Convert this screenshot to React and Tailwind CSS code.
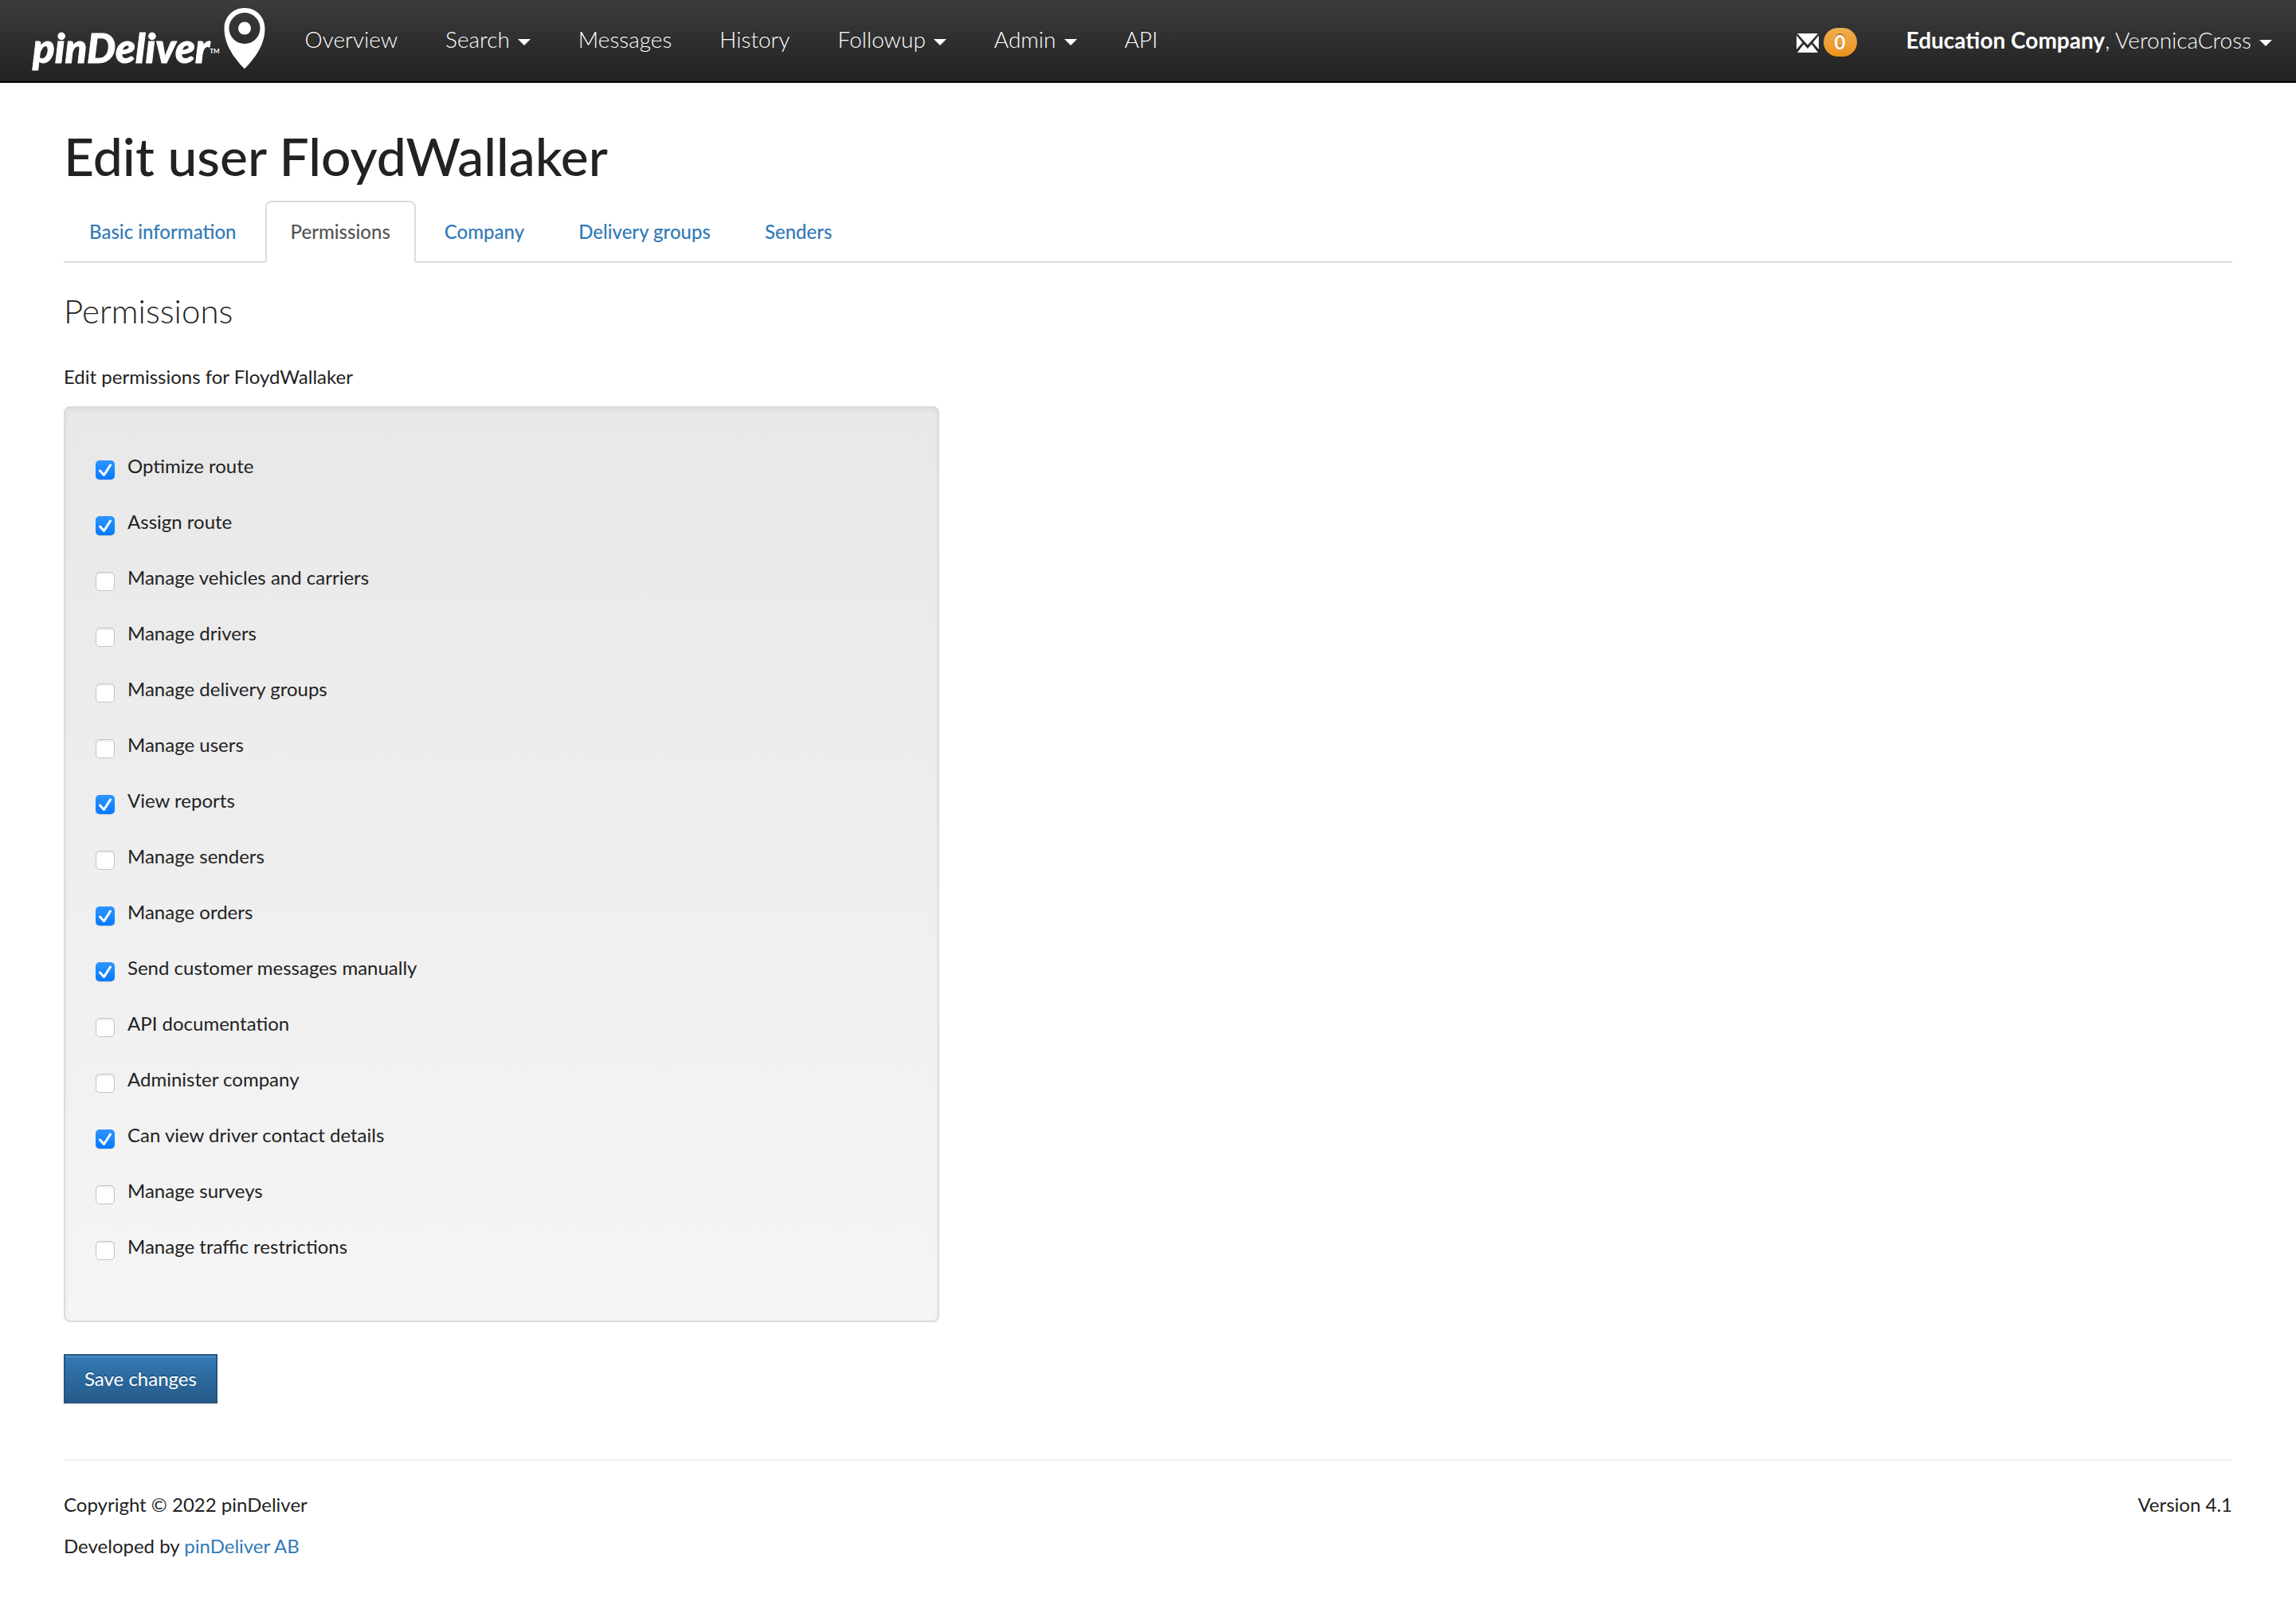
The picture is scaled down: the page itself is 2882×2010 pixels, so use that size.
const navItems = [
  { label: "Overview" },
  { label: "Search", menu: true },
  { label: "Messages" },
  { label: "History" },
  { label: "Followup", menu: true },
  { label: "Admin", menu: true },
  { label: "API" },
];

const tabs = ["Basic information", "Permissions", "Company", "Delivery groups", "Senders"];

const permissions = [
  ["Optimize route", true],
  ["Assign route", true],
  ["Manage vehicles and carriers", false],
  ["Manage drivers", false],
  ["Manage delivery groups", false],
  ["Manage users", false],
  ["View reports", true],
  ["Manage senders", false],
  ["Manage orders", true],
  ["Send customer messages manually", true],
  ["API documentation", false],
  ["Administer company", false],
  ["Can view driver contact details", true],
  ["Manage surveys", false],
  ["Manage traffic restrictions", false],
];

function Caret() {
  return (
    <svg className="mt-2 ml-[10px] h-2 w-4" viewBox="0 0 16 8" fill="currentColor" aria-hidden="true">
      <path d="M0 0h16L8 8z" />
    </svg>
  );
}

function Logo() {
  return (
    <a href="#home" className="flex items-start text-white" aria-label="pinDeliver">
      <span className="mt-8 flex items-start">
        <span className="text-[51px] leading-[56px] font-black italic [-webkit-text-stroke:1px_white]">pinDeliver</span>
        <span className="mt-7 text-[8px] leading-[8px] font-bold">TM</span>
      </span>
      <svg className="mt-[10px] ml-[5px] h-[76px] w-[52px]" viewBox="0 0 52 76" aria-hidden="true">
        <path
          fill="currentColor"
          fillRule="evenodd"
          d="M26 0C11.500 0 .5 11 .5 26C.5 47 14 64 26 76.500C38 64 51.500 47 51.500 26C51.500 11 40.500 0 26 0ZM26 6A19.500 19.500 0 1 1 26 45A19.500 19.500 0 1 1 26 6Z"
        />
        <circle cx="26" cy="25.500" r="8" fill="currentColor" />
      </svg>
    </a>
  );
}

function Permission({ label, checked }) {
  return (
    <label className="flex h-[34px] items-start gap-4">
      <span className="mt-[10px] grid size-6 shrink-0">
        <input
          type="checkbox"
          defaultChecked={checked}
          className="peer col-start-1 row-start-1 size-6 appearance-none rounded-[5px] border border-[#c4c4c4] bg-white shadow-[inset_0_2px_2px_rgba(0,0,0,0.08)] checked:border-0 checked:bg-linear-to-b checked:from-[#2d95ff] checked:to-[#007aff] checked:shadow-[0_1px_1px_rgba(0,0,0,0.15)]"
        />
        <svg
          className="pointer-events-none invisible col-start-1 row-start-1 size-6 text-white peer-checked:visible"
          viewBox="0 0 24 24"
          fill="none"
          stroke="currentColor"
          strokeWidth="3"
          strokeLinecap="round"
          strokeLinejoin="round"
          aria-hidden="true"
        >
          <path d="M5.500 13l5 5.500L18.500 6" />
        </svg>
      </span>
      {label}
    </label>
  );
}

export default function App() {
  return (
    <div className="min-h-screen bg-white font-['Lato',sans-serif] text-2xl leading-[34px] text-[#222]">
      <header className="flex h-[104px] items-start justify-between border-b-2 border-black bg-linear-to-b from-[#3c3c3c] to-[#222] pr-[30px] pl-[41px]">
        <div className="flex items-start">
          <Logo />
          <nav className="ml-5 flex pt-[29px] text-[28px] leading-10 font-light text-white text-shadow-[0_-2px_0_rgb(0_0_0/0.25)]">
            {navItems.map((item) =>
              item.menu ? (
                <button key={item.label} type="button" className="flex items-center px-[30px]">
                  {item.label}
                  <Caret />
                </button>
              ) : (
                <a key={item.label} href="#nav" className="px-[30px]">
                  {item.label}
                </a>
              )
            )}
          </nav>
        </div>
        <div className="flex pt-[29px] text-[28px] leading-10 font-light text-white text-shadow-[0_-2px_0_rgb(0_0_0/0.25)]">
          <a href="#messages" className="flex items-start px-[30px]" aria-label="Messages, 0 unread">
            <svg className="mt-[13px] h-6 w-7" viewBox="0 0 28 24" fill="currentColor" aria-hidden="true">
              <path d="M1 0h26L14 14.500zM0 2.500L7.500 11.500 0 20zM28 2.500v17.500L20.500 11.500zM1 24l8-10.500 5 5.500 5-5.500 8 10.500z" />
            </svg>
            <span className="mt-[6px] ml-[6px] flex h-9 w-[42px] items-center justify-center rounded-[18px] bg-linear-to-b from-[#f0ad4e] to-[#eb9316] text-2xl leading-9 font-bold">
              0
            </span>
          </a>
          <button type="button" className="flex items-center pl-8">
            <span>
              <b className="font-bold">Education Company</b>, VeronicaCross
            </span>
            <Caret />
          </button>
        </div>
      </header>

      <main className="px-20 pt-14">
        <h1 className="text-[66px] leading-[72px] font-medium">Edit user FloydWallaker</h1>
        <ul className="mt-5 flex gap-1 border-b-2 border-[#ddd]">
          {tabs.map((tab) => (
            <li key={tab} className="-mb-[2px]">
              {tab === "Permissions" ? (
                <a
                  href="#tab"
                  aria-current="page"
                  className="block rounded-t-lg border-2 border-[#ddd] border-b-white bg-white px-[30px] py-5 font-medium text-[#555]"
                >
                  {tab}
                </a>
              ) : (
                <a href="#tab" className="block border-2 border-transparent px-[30px] py-5 font-medium text-[#337ab7]">
                  {tab}
                </a>
              )}
            </li>
          ))}
        </ul>

        <h2 className="mt-9 text-[42px] leading-[48px] font-light">Permissions</h2>

        <form onSubmit={(e) => e.preventDefault()}>
          <div className="-mx-[30px]">
            <div className="w-5/12 px-[30px]">
              <p className="mt-[42px]">Edit permissions for FloydWallaker</p>
              <div className="mt-5 flex flex-col gap-9 rounded-lg border-2 border-[#dcdcdc] bg-linear-to-b from-[#e8e8e8] to-[#f5f5f5] px-[38px] pt-14 pb-[76px] shadow-[inset_0_2px_6px_rgba(0,0,0,0.05)]">
                {permissions.map(([label, checked]) => (
                  <Permission key={label} label={label} checked={checked} />
                ))}
              </div>
            </div>
          </div>
          <button
            type="submit"
            className="mt-10 border-2 border-[#245580] bg-linear-to-b from-[#337ab7] to-[#265a88] px-6 py-3 text-white shadow-[inset_0_2px_0_rgba(255,255,255,0.15),0_2px_2px_rgba(0,0,0,0.075)] text-shadow-[0_-2px_0_rgb(0_0_0/0.2)]"
          >
            Save changes
          </button>
        </form>

        <footer className="mt-[70px] flex items-start justify-between border-t-2 border-[#eee] pt-[38px]">
          <div className="flex flex-col gap-[18px]">
            <p>Copyright © 2022 pinDeliver</p>
            <p>
              Developed by{" "}
              <a href="#pindeliver" className="text-[#337ab7]">
                pinDeliver AB
              </a>
            </p>
          </div>
          <p>Version 4.1</p>
        </footer>
      </main>
    </div>
  );
}
